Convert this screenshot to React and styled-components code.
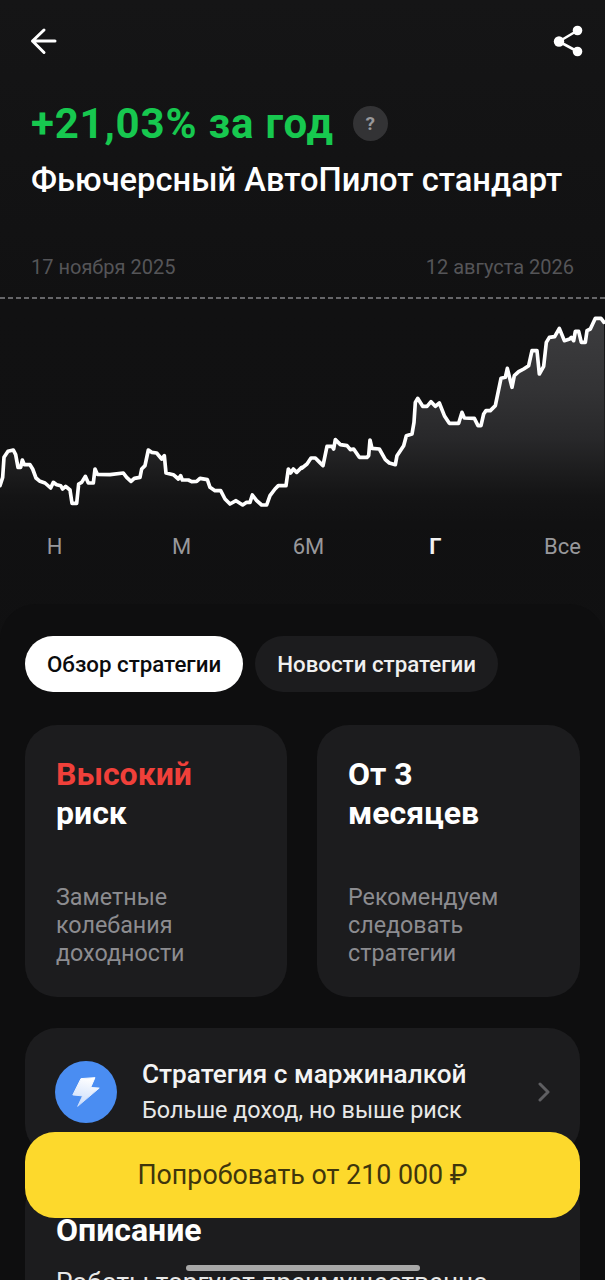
import React from "react";
import styled, { createGlobalStyle } from "styled-components";

const leftLine = "0,590 8,565 12,505 24,487 40,483 47,497 54,535 62,535 67,513 73,527 90,527 98,540 108,567 120,577 135,582 152,597 160,580 170,587 182,590 188,600 197,592 210,603 216,643 230,643 236,585 245,580 256,562 265,582 280,582 285,540 292,556 330,557 370,552 380,565 393,577 403,568 420,565 425,540 435,530 445,483 455,490 470,492 485,510 493,500 498,552 520,557 535,570 542,560 547,573 565,573 575,578 590,577 600,568 622,572 630,595 645,605 662,605 675,630 690,645 708,635 728,648 740,640 750,640 757,618 770,635 785,648 800,648 810,620 825,600 835,590 858,590 865,540 872,552 880,540 890,550 905,535";
const rightLine = "0,537 15,525 27,507 40,507 50,517 63,530 75,472 90,472 95,480 100,452 115,467 135,470 145,482 155,480 172,505 195,505 200,500 204,453 210,478 232,480 250,512 262,522 280,527 285,500 305,470 313,440 330,435 336,400 340,340 347,328 362,352 375,352 387,338 400,352 412,342 428,382 442,403 470,403 480,370 487,387 517,388 528,410 537,410 545,375 552,365 565,365 580,350 597,268 610,265 616,238 630,295 637,260 650,248 665,240 680,230 690,185 705,185 712,255 725,232 733,160 742,145 758,143 772,118 787,155 803,150 808,145 815,155 820,127 830,127 838,160 850,160 855,125 865,120 880,88 897,88 906,100";

const shiftRight = rightLine
  .split(" ")
  .map((p) => {
    const [x, y] = p.split(",");
    return `${Number(x) + 906},${y}`;
  })
  .join(" ");
const linePoints = `${leftLine} ${shiftRight}`;
const areaPoints = `${linePoints} 1815,720 0,720`;

const periods = ["Н", "М", "6М", "Г", "Все"];

const GlobalStyle = createGlobalStyle`
  html, body {
    margin: 0;
    padding: 0;
    background: #101011;
  }
  * {
    box-sizing: border-box;
  }
`;

const Page = styled.div`
  position: relative;
  width: 605px;
  height: 1280px;
  overflow: hidden;
  background: linear-gradient(180deg, #151516 0%, #111112 24%, #0f0f10 100%);
  font-family: Roboto, "Noto Sans", sans-serif;
  color: #fff;
`;

const TopBar = styled.div`
  display: flex;
  justify-content: space-between;
  align-items: center;
  height: 42px;
  padding: 20px 22px 0 27px;
  box-sizing: content-box;
`;

const Header = styled.div`
  padding: 38px 31px 0;
`;

const ReturnRow = styled.div`
  display: flex;
  align-items: center;
  gap: 19px;
  height: 46px;
`;

const ReturnText = styled.div`
  font-size: 42px;
  letter-spacing: 0.8px;
  font-weight: 700;
  color: #17c84f;
`;

const HelpBadge = styled.div`
  width: 35px;
  height: 35px;
  border-radius: 50%;
  background: #333335;
  color: #98989b;
  font-size: 19px;
  font-weight: 700;
  display: flex;
  align-items: center;
  justify-content: center;
`;

const Title = styled.div`
  margin-top: 16px;
  font-size: 32.7px;
  line-height: 36px;
  font-weight: 500;
  white-space: nowrap;
`;

const Dates = styled.div`
  display: flex;
  justify-content: space-between;
  margin-top: 57px;
  font-size: 20px;
  line-height: 24px;
  color: #555558;
`;

const ChartBox = styled.div`
  margin-top: 18px;
  height: 233px;
`;

const DashLine = styled.div`
  height: 2px;
  background: repeating-linear-gradient(90deg, #666669 0 5px, transparent 5px 8px);
`;

const ChartSvg = styled.svg`
  display: block;
  width: 605px;
  height: 240px;
  margin-top: -10px;
`;

const Periods = styled.div`
  display: grid;
  grid-template-columns: repeat(5, 127px);
  justify-items: center;
  margin: 3px 0 0 -9px;
  height: 30px;
`;

const Period = styled.div`
  font-size: 22px;
  line-height: 28px;
  font-weight: ${(p) => (p.$active ? 700 : 400)};
  color: ${(p) => (p.$active ? "#f2f2f2" : "#98989b")};
`;

const Sheet = styled.div`
  margin-top: 41px;
  padding: 32px 25px 0;
  border-radius: 36px 36px 0 0;
  background: #0e0e0f;
`;

const Tabs = styled.div`
  display: flex;
  gap: 12px;
`;

const Tab = styled.div`
  height: 56px;
  padding: 0 22px;
  border-radius: 28px;
  display: flex;
  align-items: center;
  font-size: 22.3px;
  font-weight: 500;
  background: ${(p) => (p.$active ? "#fff" : "#1c1c1e")};
  color: ${(p) => (p.$active ? "#0b0b0c" : "#f0f0f0")};
`;

const Cards = styled.div`
  display: grid;
  grid-template-columns: 262px 263px;
  gap: 30px;
  margin-top: 33px;
`;

const Card = styled.div`
  height: 272px;
  padding: 30px 30px 0 31px;
  border-radius: 32px;
  background: #1c1c1e;
`;

const CardHead = styled.div`
  font-size: 32px;
  line-height: 39px;
  font-weight: 700;
  height: 128px;
`;

const Risk = styled.span`
  color: #f0403a;
`;

const CardNote = styled.div`
  font-size: 23.3px;
  line-height: 28px;
  color: #8c8c90;
`;

const MarginRow = styled.div`
  display: flex;
  align-items: center;
  height: 128px;
  margin-top: 31px;
  padding: 0 29px 0 30px;
  border-radius: 32px;
  background: #1c1c1e;
`;

const BoltCircle = styled.div`
  flex: none;
  width: 62px;
  height: 62px;
  border-radius: 50%;
  background: #4a8df2;
  display: flex;
  align-items: center;
  justify-content: center;
`;

const MarginText = styled.div`
  flex: 1;
  margin-left: 25px;
`;

const MarginTitle = styled.div`
  font-size: 26.2px;
  line-height: 36px;
  font-weight: 500;
  color: #f4f4f4;
`;

const MarginSub = styled.div`
  font-size: 23.4px;
  line-height: 36px;
  color: #e8e8e8;
`;

const Description = styled.div`
  margin-top: 20px;
  padding: 36px 31px 0;
  border-radius: 32px 32px 0 0;
  background: #1c1c1e;
  height: 200px;
`;

const DescHead = styled.div`
  font-size: 32px;
  line-height: 36px;
  font-weight: 700;
`;

const DescText = styled.div`
  margin-top: 18px;
  font-size: 26.2px;
  line-height: 32px;
  white-space: nowrap;
  color: #e8e8e8;
`;

const TryButton = styled.div`
  position: absolute;
  left: 25px;
  top: 1132px;
  width: 555px;
  height: 86px;
  border-radius: 30px;
  background: #fdd92c;
  color: #3f360c;
  font-size: 26.8px;
  display: flex;
  align-items: center;
  justify-content: center;
`;

const HomeBar = styled.div`
  position: absolute;
  left: 186px;
  top: 1265px;
  width: 234px;
  height: 6px;
  border-radius: 3px;
  background: #a8a8a8;
`;

export default function App() {
  return (
    <Page>
      <GlobalStyle />
      <TopBar>
        <svg width="32" height="32" viewBox="0 0 32 32" fill="none" stroke="#fff" strokeWidth="3" strokeLinecap="round" strokeLinejoin="round">
          <path d="M28 16 H5.5 M17 5 L5.5 16 L17 27.5" />
        </svg>
        <svg width="30" height="32" viewBox="0 0 30 32" fill="#fff">
          <circle cx="6" cy="16.5" r="5.2" />
          <circle cx="24.5" cy="5.5" r="4.8" />
          <circle cx="24.5" cy="26.5" r="4.8" />
          <path d="M6 16.5 L24.5 5.5 M6 16.5 L24.5 26.5" stroke="#fff" strokeWidth="2.6" fill="none" />
        </svg>
      </TopBar>
      <Header>
        <ReturnRow>
          <ReturnText>+21,03% за год</ReturnText>
          <HelpBadge>?</HelpBadge>
        </ReturnRow>
        <Title>Фьючерсный АвтоПилот стандарт</Title>
        <Dates>
          <span>17 ноября 2025</span>
          <span>12 августа 2026</span>
        </Dates>
      </Header>
      <ChartBox>
        <DashLine />
        <ChartSvg viewBox="0 0 1815 720">
          <defs>
            <linearGradient id="areaFill" gradientUnits="userSpaceOnUse" x1="0" y1="100" x2="0" y2="700">
              <stop offset="0" stopColor="#3c3c3e" />
              <stop offset="0.33" stopColor="#333335" />
              <stop offset="0.58" stopColor="#28282a" />
              <stop offset="0.75" stopColor="#1c1c1d" />
              <stop offset="0.87" stopColor="#141415" />
              <stop offset="1" stopColor="#111112" />
            </linearGradient>
          </defs>
          <polygon points={areaPoints} fill="url(#areaFill)" />
          <polyline points={linePoints} fill="none" stroke="#fff" strokeWidth="11" strokeLinejoin="round" strokeLinecap="round" />
        </ChartSvg>
      </ChartBox>
      <Periods>
        {periods.map((p) => (
          <Period key={p} $active={p === "Г"}>{p}</Period>
        ))}
      </Periods>
      <Sheet>
        <Tabs>
          <Tab $active>Обзор стратегии</Tab>
          <Tab>Новости стратегии</Tab>
        </Tabs>
        <Cards>
          <Card>
            <CardHead>
              <Risk>Высокий</Risk>
              <br />
              риск
            </CardHead>
            <CardNote>
              Заметные
              <br />
              колебания
              <br />
              доходности
            </CardNote>
          </Card>
          <Card>
            <CardHead>
              От 3
              <br />
              месяцев
            </CardHead>
            <CardNote>
              Рекомендуем
              <br />
              следовать
              <br />
              стратегии
            </CardNote>
          </Card>
        </Cards>
        <MarginRow>
          <BoltCircle>
            <svg width="28" height="30" viewBox="95 88 85 92">
              <defs>
                <linearGradient id="bolt" x1="0.6" y1="0" x2="0.4" y2="1">
                  <stop offset="0" stopColor="#ffffff" />
                  <stop offset="1" stopColor="#c9dcfb" />
                </linearGradient>
              </defs>
              <path d="M122 93 L165 90 L152 120 L178 122 L112 178 L127 146 L97 143 Z" fill="url(#bolt)" stroke="url(#bolt)" strokeWidth="3" strokeLinejoin="round" />
            </svg>
          </BoltCircle>
          <MarginText>
            <MarginTitle>Стратегия с маржиналкой</MarginTitle>
            <MarginSub>Больше доход, но выше риск</MarginSub>
          </MarginText>
          <svg width="14" height="20" viewBox="0 0 14 20" fill="none" stroke="#5f5f62" strokeWidth="3" strokeLinecap="round" strokeLinejoin="round">
            <path d="M3 2 L11 10 L3 18" />
          </svg>
        </MarginRow>
        <Description>
          <DescHead>Описание</DescHead>
          <DescText>Роботы торгуют преимущественно</DescText>
        </Description>
      </Sheet>
      <TryButton>Попробовать от 210 000 ₽</TryButton>
      <HomeBar />
    </Page>
  );
}
